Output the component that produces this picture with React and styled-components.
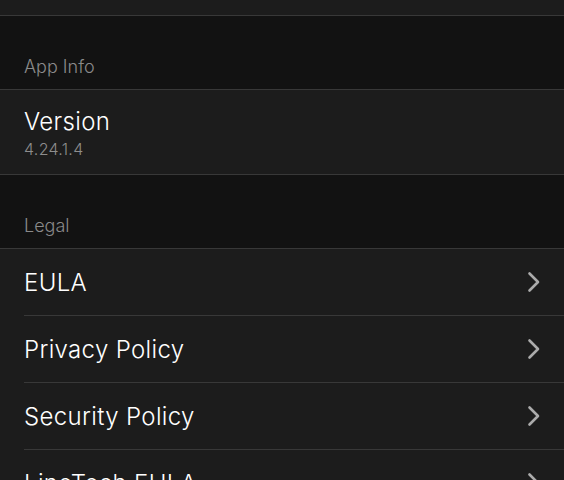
import React from 'react';
import styled, { createGlobalStyle } from 'styled-components';

const GlobalStyle = createGlobalStyle`
    html, body {
        margin: 0;
        padding: 0;
        background: #121212;
        font-family: Inter, Roboto, 'Liberation Sans', sans-serif;
        -webkit-font-smoothing: antialiased;
    }
`;

const Screen = styled.div`
    display: flex;
    flex-direction: column;
    width: 564px;
    height: 480px;
    overflow: hidden;
    background: #121212;
`;

const TopCell = styled.div`
    height: 15px;
    flex-shrink: 0;
    background: #1c1c1c;
    border-bottom: 1px solid #383838;
`;

const SectionHeader = styled.div`
    height: 73px;
    flex-shrink: 0;
    display: flex;
    align-items: flex-end;
    padding: 0 24px 11px;
    box-sizing: border-box;
    color: #8a8a8a;
    font-size: 18px;
    line-height: 22px;
    font-weight: 350;
`;

const Group = styled.div`
    flex-shrink: 0;
    background: #1c1c1c;
    border-top: 1px solid #383838;
    border-bottom: 1px solid #383838;
`;

const Row = styled.div`
    display: flex;
    align-items: center;
    justify-content: space-between;
    height: ${({ tall }) => (tall ? '84px' : '66px')};
    margin-left: 24px;
    padding-right: 23px;
    border-top: ${({ first }) => (first ? 'none' : '1px solid #383838')};
`;

const TextStack = styled.div`
    display: flex;
    flex-direction: column;
    gap: 2px;
`;

const Title = styled.div`
    color: #ffffff;
    font-size: 24px;
    line-height: 30px;
    padding-top: 2px;
    font-weight: 350;
    letter-spacing: 0.35px;
`;

const Detail = styled.div`
    color: #8d8d8d;
    font-size: 16px;
    line-height: 20px;
    font-weight: 350;
    letter-spacing: 0.3px;
`;

const Chevron = () => (
    <svg width="14" height="22" viewBox="0 0 14 22">
        <polyline
            points="2.5,2.5 11,11 2.5,19.5"
            fill="none"
            stroke="#ababab"
            strokeWidth="2.6"
            strokeLinecap="round"
            strokeLinejoin="round"
        />
    </svg>
);

const legalItems = ['EULA', 'Privacy Policy', 'Security Policy', 'LineTech EULA'];

const App = () => (
    <Screen>
        <GlobalStyle />
        <TopCell />
        <SectionHeader>App Info</SectionHeader>
        <Group>
            <Row first tall>
                <TextStack>
                    <Title>Version</Title>
                    <Detail>4.24.1.4</Detail>
                </TextStack>
            </Row>
        </Group>
        <SectionHeader>Legal</SectionHeader>
        <Group>
            {legalItems.map((item, i) => (
                <Row key={item} first={i === 0}>
                    <Title>{item}</Title>
                    <Chevron />
                </Row>
            ))}
        </Group>
    </Screen>
);

export default App;
